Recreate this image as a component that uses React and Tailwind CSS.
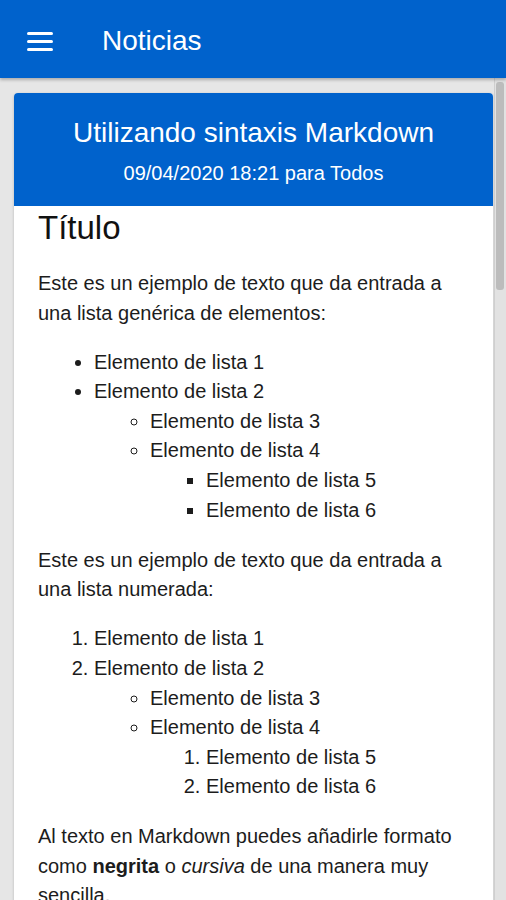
import React from 'react';

const font = { fontFamily: '"Liberation Sans", Arial, sans-serif' };

export default function App() {
  return (
    <div className="h-[900px] w-[506px] overflow-hidden flex flex-col bg-[#e6e6e6]" style={font}>
      {/* App bar */}
      <header className="h-[78px] shrink-0 bg-[#0062cc] flex items-center pt-[4px] shadow-[0_2px_3px_rgba(0,0,0,0.25)] relative z-10">
        <button className="ml-[27px] w-[26px] flex flex-col gap-[5px]">
          <span className="block h-[3px] bg-white rounded-sm" />
          <span className="block h-[3px] bg-white rounded-sm" />
          <span className="block h-[3px] bg-white rounded-sm" />
        </button>
        <h1 className="ml-[49px] text-[28px] leading-[34px] text-white">Noticias</h1>
      </header>

      <div className="flex-1 flex min-h-0">
        <main className="flex-1 overflow-hidden pl-[14px] pr-px pt-[15px]">
          <article className="bg-white rounded-t-[4px] shadow-[0_1px_3px_rgba(0,0,0,0.2)]">
            <div className="bg-[#0062cc] rounded-t-[4px] pt-[23px] pb-[21px] text-center text-white">
              <h2 className="text-[28px] leading-[34px]">Utilizando sintaxis Markdown</h2>
              <p className="mt-[11px] text-[20px] leading-[24px]">09/04/2020 18:21 para Todos</p>
            </div>

            <div className="px-[24px] pt-[2px] pb-6 text-[20px] leading-[29.6px] text-[#1c1c1c]">
              <h3 className="text-[33px] leading-[40px] text-[#111]">Título</h3>
              <p className="mt-[21px]">
                Este es un ejemplo de texto que da entrada a una lista genérica de elementos:
              </p>
              <ul className="list-disc pl-[56px] mt-[19.5px]">
                <li>Elemento de lista 1</li>
                <li>
                  Elemento de lista 2
                  <ul className="list-[circle] pl-[56px]">
                    <li>Elemento de lista 3</li>
                    <li>
                      Elemento de lista 4
                      <ul className="list-[square] pl-[56px]">
                        <li>Elemento de lista 5</li>
                        <li>Elemento de lista 6</li>
                      </ul>
                    </li>
                  </ul>
                </li>
              </ul>
              <p className="mt-[20.5px]">
                Este es un ejemplo de texto que da entrada a una lista numerada:
              </p>
              <ol className="list-decimal pl-[56px] mt-[19.5px]">
                <li>Elemento de lista 1</li>
                <li>
                  Elemento de lista 2
                  <ul className="list-[circle] pl-[56px]">
                    <li>Elemento de lista 3</li>
                    <li>
                      Elemento de lista 4
                      <ol className="list-decimal pl-[56px]">
                        <li>Elemento de lista 5</li>
                        <li>Elemento de lista 6</li>
                      </ol>
                    </li>
                  </ul>
                </li>
              </ol>
              <p className="mt-[20px]">
                Al texto en Markdown puedes añadirle formato como <strong className="font-bold">negrita</strong> o{' '}
                <em className="italic">cursiva</em> de una manera muy sencilla.
              </p>
            </div>
          </article>
        </main>

        {/* scrollbar */}
        <div className="w-[12px] shrink-0 bg-[#e2e2e2] border-l border-[#cfcfcf] pt-[4px] pl-[1px] pr-[2px]">
          <div className="h-[208px] rounded-[3px] bg-[#bcbcbc]" />
        </div>
      </div>
    </div>
  );
}
